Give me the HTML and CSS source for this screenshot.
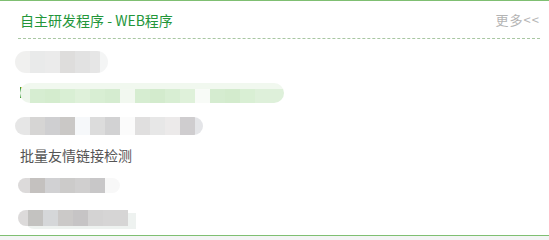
FILE: index.html
```html
<!DOCTYPE html>
<html lang="zh-CN">
<head>
    <meta charset="UTF-8">
    <meta name="viewport" content="width=device-width, initial-scale=1.0">
    <title>自主研发程序</title>
    <link rel="stylesheet" href="styles.css">
</head>
<body>
    <div class="box">
        <div class="box-head">
            <h3>自主研发程序 - WEB程序</h3>
            <a class="more" href="#">更多&lt;&lt;</a>
        </div>

        <!-- redacted entries are drawn as pixelated pills -->
        <ul class="box-list">
            <li><span class="mask mask-a"></span></li>
            <li><span class="mark"></span><span class="mask mask-b"></span></li>
            <li><span class="mask mask-c"></span></li>
            <li><a href="#">批量友情链接检测</a></li>
            <li><span class="mask mask-d"></span></li>
            <li><span class="mask mask-e"></span></li>
        </ul>
    </div>
</body>
</html>
```

FILE: styles.css
```css
body {
    margin: 0;
    font-family: "Noto Sans CJK SC", "Liberation Sans", sans-serif;
    font-size: 14px;
    background-color: #f3f4f5;
}

.box {
    background: #fff;
    border-top: 1px solid #7fbf72;
    border-bottom: 1px solid #7fbf72;
    height: 234px;
}

.box-head {
    display: flex;
    justify-content: space-between;
    align-items: center;
    height: 37px;
    margin: 0 9px 0 18px;
    border-bottom: 1px dashed #a9c7a3;
}

.box-head h3 {
    margin: 0;
    padding-left: 2px;
    font-size: 14px;
    font-weight: normal;
    color: #23963a;
}

.more {
    color: #b4b4b4;
    text-decoration: none;
    font-size: 13px;
    letter-spacing: 1px;
}

.box-list {
    list-style: none;
    margin: 0;
    padding: 7px 0 0 18px;
}

.box-list li {
    height: 31px;
    display: flex;
    align-items: center;
}

.box-list a {
    color: #555;
    text-decoration: none;
    padding-left: 2px;
}

/* Pixelated placeholders */
.mask {
    display: inline-block;
    border-radius: 11px;
}

.mask-a {
    width: 93px;
    height: 22px;
    margin-left: -3px;
    background:
        linear-gradient(to right,
            #f0f0ef 0 15px, #e9eaea 15px 30px, #ebebeb 30px 45px,
            #dedddc 45px 60px, #e2e2e2 60px 75px, #e6e6e6 75px 85px, #f4f5f5 85px);
}

.mark {
    display: inline-block;
    width: 2px;
    height: 11px;
    margin-left: 2px;
    background: #e9c75a;
    border-left: 1px solid #3a9a3a;
}

.mask-b {
    width: 264px;
    height: 20px;
    margin-left: -3px;
    border-radius: 10px;
    background:
        linear-gradient(#f1f8ef 0 6px, transparent 6px),
        linear-gradient(to right,
            #eef6ec 0 10px, #d6edd1 10px 25px, #d4ecce 25px 40px, #d9efd4 40px 55px,
            #dff1da 55px 70px, #d8eed3 70px 85px, #d5ecd0 85px 100px, #f2f8f0 100px 115px,
            #d6edd1 115px 130px, #d3ebcd 130px 145px, #d8eed3 145px 160px, #dff1da 160px 175px,
            #f8fbf7 175px 190px, #d5ecd0 190px 205px, #d3ebcd 205px 220px, #d9efd4 220px 235px,
            #def0da 235px);
}

.mask-c {
    width: 188px;
    height: 18px;
    margin-left: -3px;
    margin-top: 4px;
    border-radius: 9px;
    background:
        linear-gradient(to right,
            #e6e6e6 0 15px, #d6d5d4 15px 30px, #cfcfd1 30px 45px, #cac8c6 45px 60px,
            #f6f8fa 60px 75px, #dcdcdc 75px 90px, #d2d2d3 90px 105px, #fbfbfb 105px 120px,
            #e0dfdf 120px 135px, #e7e7e7 135px 150px, #eceaea 150px 165px, #cfcdcf 165px 180px,
            #e4e5e8 180px);
}

.mask-d {
    width: 102px;
    height: 15px;
    border-radius: 8px;
    background:
        linear-gradient(to right,
            #dcdada 0 12px, #c4c1bf 12px 27px, #d1d1d3 27px 42px, #cccbca 42px 57px,
            #d0cfcf 57px 72px, #c8c7c8 72px 87px, #f8f8f8 87px);
}

.mask-e {
    width: 110px;
    height: 16px;
    margin-top: 2px;
    border-radius: 8px 0 0 8px;
    box-shadow: 8px 3px 0 #eef2f0;
    background:
        linear-gradient(to right,
            #dcdada 0 10px, #c3c2c0 10px 25px, #d5d7d9 25px 40px, #cbc9c8 40px 55px,
            #c6c4c5 55px 70px, #d4d3d3 70px 85px, #d6d5d5 85px);
}
```
